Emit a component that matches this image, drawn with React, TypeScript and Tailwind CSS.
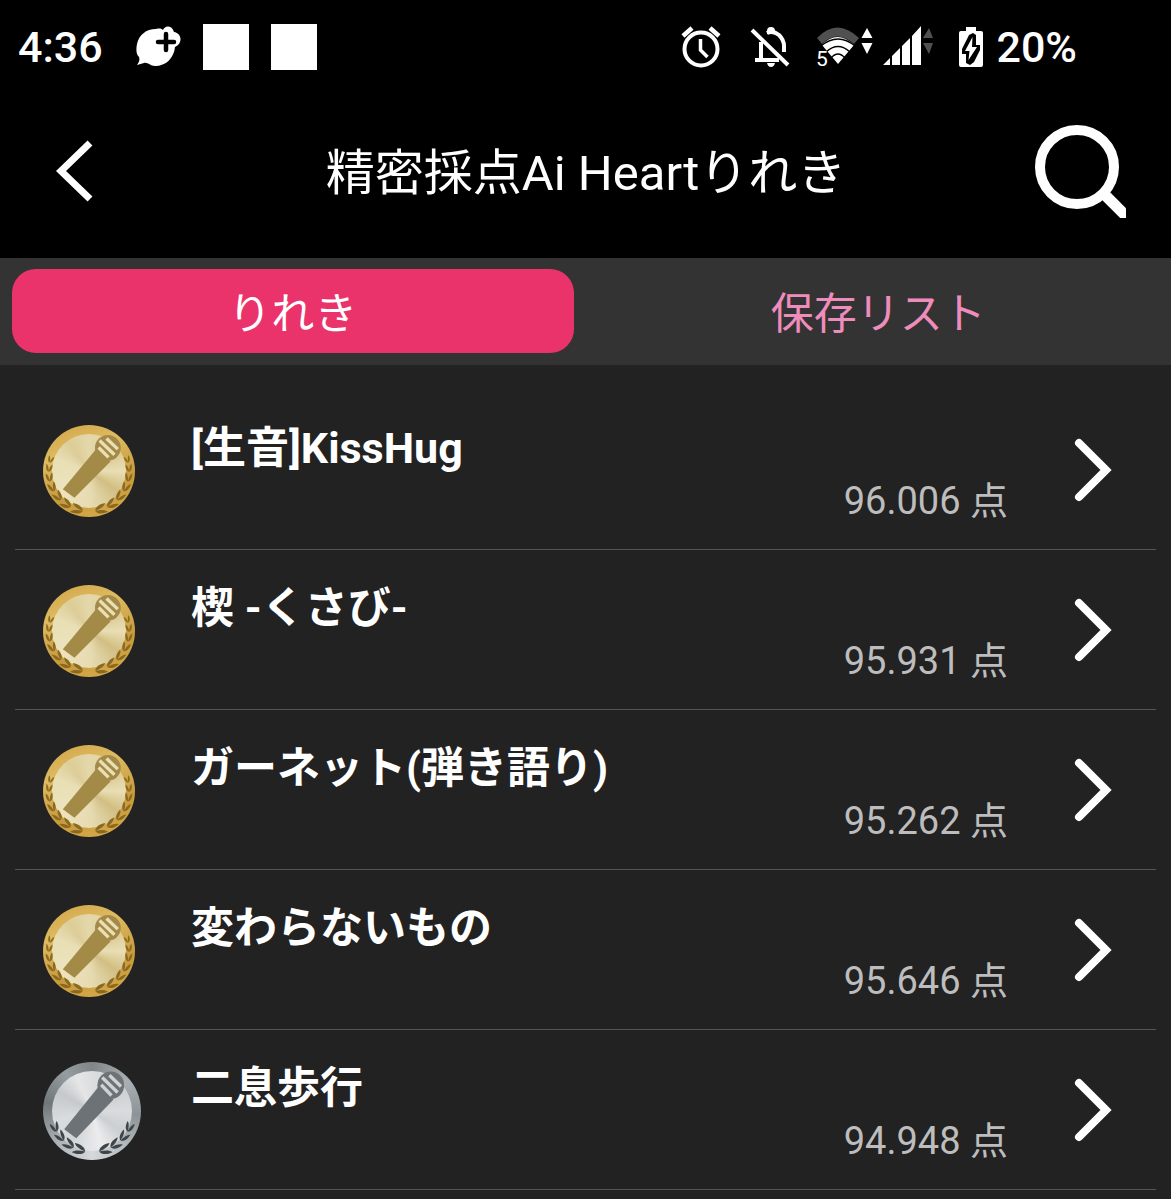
import React from "react";

type Tone = "gold" | "silver";

const songs: { title: string; score: string; tone: Tone }[] = [
  { title: "[生音]KissHug", score: "96.006", tone: "gold" },
  { title: "楔 -くさび‑", score: "95.931", tone: "gold" },
  { title: "ガーネット(弾き語り)", score: "95.262", tone: "gold" },
  { title: "変わらないもの", score: "95.646", tone: "gold" },
  { title: "二息歩行", score: "94.948", tone: "silver" },
];

const LEAF = "M0 0C2-12 12-20 27-17C24-8 13-1 0 0ZM0 0C2 12 12 20 27 17C24 8 13 1 0 0Z";

function Laurel({ cx, cy, r, angles, fill, size }: { cx: number; cy: number; r: number; angles: number[]; fill: string; size: number }) {
  return (
    <g fill={fill}>
      {[-1, 1].map((side) =>
        angles.map((a, i) => {
          const t = (a * Math.PI) / 180;
          const x = cx + side * r * Math.sin(t);
          const y = cy + r * Math.cos(t);
          const turn = side === 1 ? -a - 8 : 180 + a + 8;
          const s = size * (1 - i * 0.07);
          return <path key={`${side}${a}`} d={LEAF} transform={`translate(${x} ${y}) rotate(${turn}) scale(${s * 1.2} ${s * 0.75})`} />;
        }),
      )}
    </g>
  );
}

function Mic({ fill, stripe }: { fill: string; stripe: string }) {
  return (
    <g>
      <path d="M197 119 98 238 133 264 242 154Z" fill={fill} />
      <circle cx="234" cy="113" r="39" fill={fill} />
      <g stroke={stripe} strokeWidth="10">
        <path d="M206 112 236 142" />
        <path d="M209 91 254 134" />
        <path d="M230 85 264 117" />
      </g>
    </g>
  );
}

function GoldMedal() {
  return (
    <div className="relative size-[92px] rounded-full bg-[linear-gradient(160deg,#cfa347,#dfba60_30%,#c79a3c_65%,#d9ad4c)]">
      <div className="absolute inset-[9px] rounded-full bg-[conic-gradient(from_0deg,#e4d8aa,#dccd98_60deg,#e9deb4_90deg,#d1be82_125deg,#e6dab0_175deg,#ede3bc_230deg,#e9dfb6_290deg,#dccd98_325deg,#e4d8aa)]" />
      <svg viewBox="38 44 278 278" className="absolute inset-0 size-full" aria-hidden="true">
        <Laurel cx={177} cy={183} r={122} angles={[9, 27, 44, 60, 75, 89, 102]} fill="#8a6a22" size={1.1} />
        <Mic fill="#a38a46" stripe="#eadfb4" />
      </svg>
    </div>
  );
}

function SilverMedal() {
  return (
    <div className="relative size-[98px] rounded-full bg-[conic-gradient(from_0deg,#7f8589,#a9afb3_50deg,#8d9498_95deg,#b6bcc0_140deg,#d6d9db_180deg,#a9afb3_230deg,#70777b_280deg,#969da1_325deg,#7f8589)]">
      <div className="absolute inset-[9px] rounded-full bg-[conic-gradient(from_0deg,#dcdee0,#cccfd1_50deg,#d9dbdd_90deg,#cccfd1_125deg,#ebeced_165deg,#d2d5d7_215deg,#d9dcde_255deg,#c6c9cc_300deg,#e4e6e7_335deg,#dcdee0)]" />
      <svg viewBox="38 33 295 295" className="absolute inset-0 size-full" aria-hidden="true">
        <Laurel cx={186} cy={181} r={123} angles={[10, 27, 44, 60]} fill="#3f464b" size={1.15} />
        <g transform="translate(1 -17) scale(1.03 1.06)">
          <Mic fill="#6c7276" stripe="#cfd2d4" />
        </g>
      </svg>
    </div>
  );
}

function StatusBar() {
  return (
    <div className="flex h-[84px] items-center justify-between pt-[10px] pr-[94px] pl-[18px] text-[43px] font-medium">
      <div className="flex items-center">
        <time>4:36</time>
        <svg viewBox="0 0 46 42" className="ml-[33px] h-[42px] w-[46px]" aria-hidden="true">
          <path d="M20 3C24 2 26 3 27 4C29-1 36-1 38 6C46 7 47 18 39 21C38 32 30 40 19 40C14 40 12 36 8 37L1 39C3 36 4 34 3 31C0 28 0 23 1 18C3 9 10 3 20 3Z" fill="#fff" />
          <path d="M30 8v16M22 16h16" stroke="#000" strokeWidth="4.500" strokeLinecap="round" />
        </svg>
        <span className="ml-[21px] size-[46px] bg-white" />
        <span className="ml-[22px] size-[46px] bg-white" />
      </div>
      <div className="flex items-center">
        <svg viewBox="0 0 252 46" className="h-[46px] w-[252px]" aria-label="アラーム、通知オフ、Wi-Fi、電波" role="img">
          <g fill="none" stroke="#fff">
            <circle cx="20" cy="25" r="16.500" strokeWidth="4" />
            <path d="M19.500 15v11l7 7" strokeWidth="3.500" />
            <path d="M2 12l9-8M29 4l9 8" strokeWidth="4.500" />
            <path d="M80 18V36M86 9q6-3 12 2q5 5 5 11v6M74 36h24" strokeWidth="4" />
            <path d="M71 6 107 41" strokeWidth="4" />
          </g>
          <path d="M86 7q0-4 4-4t4 4v3h-8ZM86 39h8q-1 4-4 4t-4-4Z" fill="#fff" />
          <path d="M136 14Q156-7 178 14L173 20Q156 5 141 20Z" fill="#505050" />
          <path d="M141 21Q156 5 173 21L157 40Z" fill="#fff" />
          <g fill="none" stroke="#000" strokeWidth="1.500">
            <path d="M140 22Q157 8 174 22M145 28Q157 17 169 28M150 34Q157 26 164 34" />
          </g>
          <path d="M133 27h11l4 5v11h-15Z" fill="#000" />
          <text x="135" y="42" fill="#fff" fontSize="21" fontFamily="Roboto" fontWeight="400">5</text>
          <path d="M186 4 191.500 14h-11ZM186 30 191.500 19h-11Z" fill="#fff" />
          <path d="M202 41 209 34v7ZM211 32 219 24v17h-8ZM221 22 229 14v27h-8ZM231 12 240 2v39h-9Z" fill="#fff" />
          <path d="M248 4 252 14h-10ZM248 30 252 19h-10Z" fill="#505050" />
        </svg>
        <svg viewBox="0 0 26 42" className="ml-[25px] h-[42px] w-[26px]" aria-hidden="true">
          <path d="M8 1h10v4h5q2 0 2 2v32q0 2-2 2H3q-2 0-2-2V7q0-2 2-2h5Z" fill="#fff" />
          <path d="M15 7 11 9 4 23v5h4v9l4 2 4-3 6-12v-5h-4V9Z" fill="#000" />
          <path d="M14.500 11 7 25h4.500l-1 9L19 21h-5Z" fill="#fff" />
        </svg>
        <span className="ml-3">20%</span>
      </div>
    </div>
  );
}

export default function App() {
  return (
    <div className="min-h-screen bg-[#222222] font-[Roboto,'Noto_Sans_CJK_JP',sans-serif] text-white" lang="ja">
      <div className="bg-black">
        <StatusBar />
        <header className="flex h-[174px] items-center justify-between pr-[45px] pl-[56px]">
          <button aria-label="戻る" className="w-[81px]">
            <svg viewBox="0 0 38 62" className="h-[62px] w-[38px]" fill="none" stroke="#fff" strokeWidth="7">
              <path d="M34 3 5 31 34 59" />
            </svg>
          </button>
          <h1 className="pt-[6px] text-[49px] leading-[56px] font-normal">精密採点Ai Heartりれき</h1>
          <button aria-label="検索">
            <svg viewBox="0 0 91 93" className="h-[93px] w-[91px]" fill="none" stroke="#fff">
              <circle cx="42" cy="42" r="37" strokeWidth="10" />
              <path d="M68 68 94 94" strokeWidth="11" />
            </svg>
          </button>
        </header>
      </div>

      <div role="tablist" className="grid grid-cols-2 gap-6 bg-[#333333] px-3 pt-[11px] pb-3 text-[43px] leading-none">
        <button role="tab" aria-selected="true" className="h-[84px] rounded-3xl bg-[#eb336b] pt-[6px]">りれき</button>
        <button role="tab" aria-selected="false" className="h-[84px] rounded-3xl pt-[6px] text-[#ee8cbc]">保存リスト</button>
      </div>

      <ul className="px-[15px] pt-[25px]">
        {songs.map((song) => (
          <li key={song.title} className="border-b border-[#555555]">
            <a href="#" className="flex h-[159px] items-center pr-[44px] pl-7">
              <div className="w-[148px] shrink-0 pt-[2px]">{song.tone === "gold" ? <GoldMedal /> : <SilverMedal />}</div>
              <div className="flex flex-1 flex-col pt-[10px]">
                <p className="text-[43px] leading-[52px] font-bold">{song.title}</p>
                <p className="text-right text-[38px] leading-[54px] text-[#bdbdbd]">{song.score} 点</p>
              </div>
              <svg viewBox="0 0 38 64" className="ml-[66px] h-[64px] w-[38px]" fill="none" stroke="#fff" strokeWidth="8" strokeLinecap="round" aria-hidden="true">
                <path d="M5 5 32 32 5 59" />
              </svg>
            </a>
          </li>
        ))}
      </ul>
    </div>
  );
}
